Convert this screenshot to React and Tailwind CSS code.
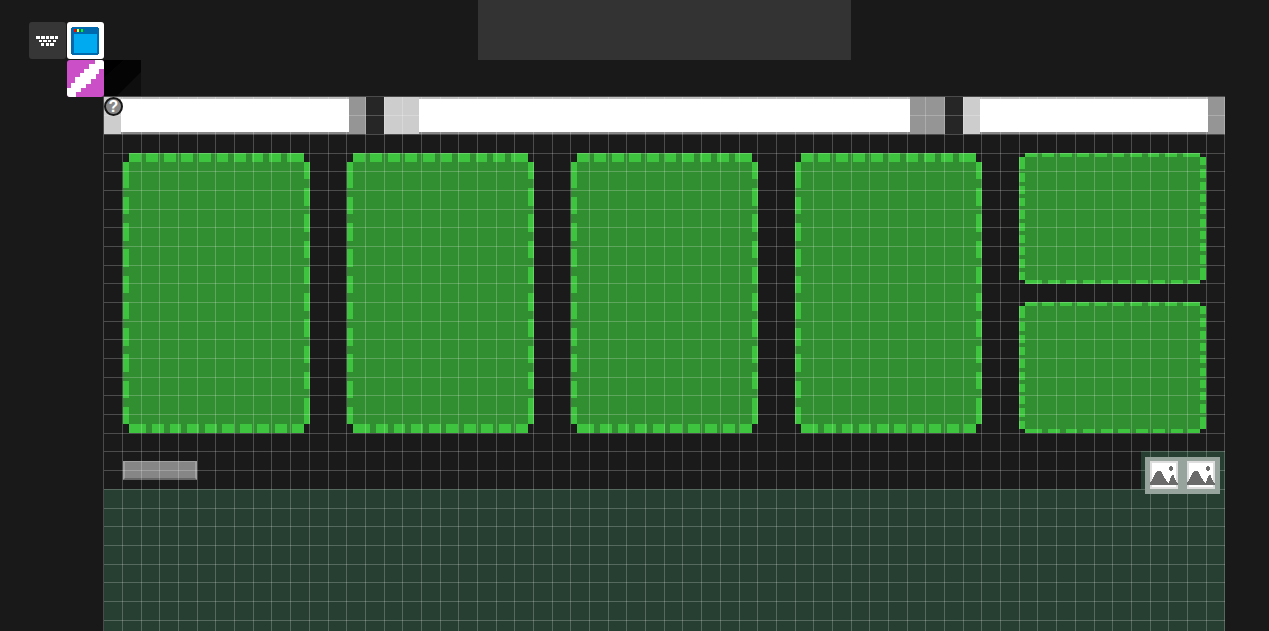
import React from "react";

const CELL = 1121 / 60;

const columnLines = Array.from({ length: 60 }, (_, i) => Math.round((i + 1) * CELL - 0.7));
const rowLines = Array.from({ length: 60 }, (_, i) => Math.round((i + 1) * CELL - 0.5));

function GridLines() {
  return (
    <svg
      className="pointer-events-none absolute inset-0 h-full w-full"
      viewBox="0 0 1121 534"
      preserveAspectRatio="xMinYMin slice"
      shapeRendering="crispEdges"
      fill="#ffffff"
      fillOpacity="0.22"
      aria-hidden="true"
    >
      {columnLines.map((x) => (
        <rect key={x} x={x} y="0" width="1" height="1122" />
      ))}
      {rowLines.map((y) => (
        <rect key={y} x="0" y={y} width="1121" height="1" />
      ))}
    </svg>
  );
}

// Dashes on a 32 x 32 texture, running clockwise from the top left corner.
const dashes = [];
for (let i = 1; i <= 30; i++) {
  if (i % 3 !== 0 || i === 30) {
    dashes.push([i, 0], [31, i]);
  }
  if (i === 1 || i % 3 !== 1) {
    dashes.push([i, 31], [0, i]);
  }
}

function Slot({ label, className }) {
  return (
    <button type="button" aria-label={label} className={"block w-full " + className}>
      <svg
        className="block h-full w-full"
        viewBox="0 0 32 32"
        preserveAspectRatio="none"
        shapeRendering="crispEdges"
        aria-hidden="true"
      >
        <path d="M1 0H31V1H32V31H31V32H1V31H0V1H1Z" fill="#318e31" />
        {dashes.map(([x, y]) => (
          <rect key={x + "-" + y} x={x} y={y} width="1" height="1" fill="#3ec43e" />
        ))}
      </svg>
    </button>
  );
}

function Bar({ className, capClass }) {
  return (
    <div className={"flex h-full " + className}>
      <div className={"bg-[#cdcdcd] " + capClass} />
      <div className="flex-1 border-t-2 border-b-2 border-t-[#bfbfbf] border-b-[#888888] bg-white" />
      <div className={"bg-[#959595] " + capClass} />
    </div>
  );
}

function KeyboardIcon() {
  return (
    <svg className="block h-full w-full" viewBox="0 0 37 37" shapeRendering="crispEdges" fill="#ffffff" aria-hidden="true">
      <path d="M7 14h4v3H7zM12 14h4v3h-4zM17 14h3v3h-3zM21 14h4v3h-4zM26 14h3v3h-3z" />
      <path d="M10 18h3v2h-3zM14 18h4v2h-4zM19 18h3v2h-3zM24 18h3v2h-3z" />
      <path d="M12 21h3v3h-3zM17 21h3v3h-3zM21 21h4v3h-4z" />
    </svg>
  );
}

function WindowIcon() {
  return (
    <svg className="block h-full w-full" viewBox="0 0 37 37" shapeRendering="crispEdges" aria-hidden="true">
      <path d="M5 5h26v1h1v26h-1v1H5v-1H4V6h1z" fill="#0068ad" />
      <path d="M7 12h23v19H7z" fill="#00aaf0" />
      <path d="M7 7h2v3H7z" fill="#ff0000" />
      <path d="M10 7h2v3h-2z" fill="#ffff00" />
      <path d="M14 7h2v3h-2z" fill="#00ff00" />
    </svg>
  );
}

function StripeIcon() {
  return (
    <svg className="block h-full w-full" viewBox="0 0 37 37" shapeRendering="crispEdges" aria-hidden="true">
      <path
        d="M28 0H37V9H32V14H29V19H24V24H19V28H14V32H9V37H0V28H4V23H8V17H13V13H17V9H22V4H28Z"
        fill="#ffffff"
      />
    </svg>
  );
}

function PictureIcon() {
  return (
    <svg className="block h-7 w-7" viewBox="0 0 28 28" shapeRendering="crispEdges" aria-hidden="true">
      <path d="M0 0H28V28H0Z" fill="#dedede" />
      <path d="M2 2H26V26H2Z" fill="#ffffff" />
      <path d="M20 5h2v1h1v3h-1v1h-2v-1h-1v-3h1z" fill="#6b6b6b" />
      <path
        d="M0 24V21H1V20H2V18H3V16H4V14H5V12H6V11H7V10H11V11H12V13H13V15H14V17H15V18H16V20H17V21H18V22H19V20H20V17H21V15H22V14H24V17H25V19H26V21H27V22H28V24Z"
        fill="#6b6b6b"
      />
    </svg>
  );
}

function Toolbar() {
  return (
    <header className="flex h-24 items-start">
      <div className="grow basis-15 pl-[29px] pt-[22px]">
        <div className="grid w-28 grid-cols-3 gap-y-px">
          <button type="button" aria-label="Keyboard" className="h-[37px] w-[37px] rounded-[3px] bg-[#363636]">
            <KeyboardIcon />
          </button>
          <button type="button" aria-label="Window" className="ml-px h-[37px] w-[37px] rounded-[3px] bg-white">
            <WindowIcon />
          </button>
          <span />
          <span />
          <button
            type="button"
            aria-label="Texture"
            className="ml-px h-[37px] w-[37px] overflow-hidden rounded-[3px] bg-[#cb50c8]"
          >
            <StripeIcon />
          </button>
          <button type="button" aria-label="Shade" className="h-[37px] w-[37px] bg-[#0e0e0e]">
            <svg className="block h-full w-full" viewBox="0 0 37 37" aria-hidden="true">
              <path d="M0 0H20L0 18Z" fill="#000000" />
              <path d="M20 0H37V12L12 37H0V18Z" fill="#040404" />
            </svg>
          </button>
        </div>
      </div>
      <div className="h-[60px] w-[373px] bg-[#333333]" />
      <div className="grow basis-0" />
    </header>
  );
}

export default function App() {
  return (
    <div className="flex min-h-screen flex-col bg-[#191919] font-['Liberation_Sans',sans-serif]">
      <Toolbar />
      <main className="relative ml-[103px] mr-11 flex flex-1 flex-col border-l border-t border-[#4a4a4a]">
        <div className="flex h-[37px] bg-[#262626]">
          <Bar className="flex-[262]" capClass="w-[17px]" />
          <div className="w-[18px]" />
          <Bar className="flex-[561]" capClass="w-[35px]" />
          <div className="w-[18px]" />
          <Bar className="flex-[262]" capClass="w-[17px]" />
        </div>

        <section className="flex gap-[37px] bg-[#1a1a1a] px-[19px] pt-[19px]">
          <div className="flex-1">
            <Slot label="Slot 1" className="h-[280px]" />
          </div>
          <div className="flex-1">
            <Slot label="Slot 2" className="h-[280px]" />
          </div>
          <div className="flex-1">
            <Slot label="Slot 3" className="h-[280px]" />
          </div>
          <div className="flex-1">
            <Slot label="Slot 4" className="h-[280px]" />
          </div>
          <div className="flex flex-1 flex-col justify-between">
            <Slot label="Slot 5" className="h-[131px]" />
            <Slot label="Slot 6" className="h-[131px]" />
          </div>
        </section>

        <div className="flex h-14 justify-between bg-[#1a1a1a] pl-[19px]">
          <div className="mt-7 h-[19px] w-[74px] border-x-2 border-b-2 border-t border-x-[#a0a0a0] border-b-[#666666] border-t-[#a0a0a0] bg-[#868686]" />
          <div className="mt-[18px] w-[84px] bg-[#273f33]" />
        </div>

        <div className="flex-1 bg-[#273f33]" />

        <GridLines />

        <button
          type="button"
          aria-label="Help"
          className="absolute left-0 top-0 flex h-[19px] w-[19px] items-center justify-center rounded-full border-2 border-[#161616] bg-[#888888] text-base font-bold leading-4 text-white"
        >
          ?
        </button>

        <div className="absolute right-[5px] top-[360px] flex h-[37px] w-[75px] items-start justify-between bg-[#96a49d] px-[5px] pt-1">
          <button type="button" aria-label="Picture 1">
            <PictureIcon />
          </button>
          <button type="button" aria-label="Picture 2">
            <PictureIcon />
          </button>
        </div>
      </main>
    </div>
  );
}
